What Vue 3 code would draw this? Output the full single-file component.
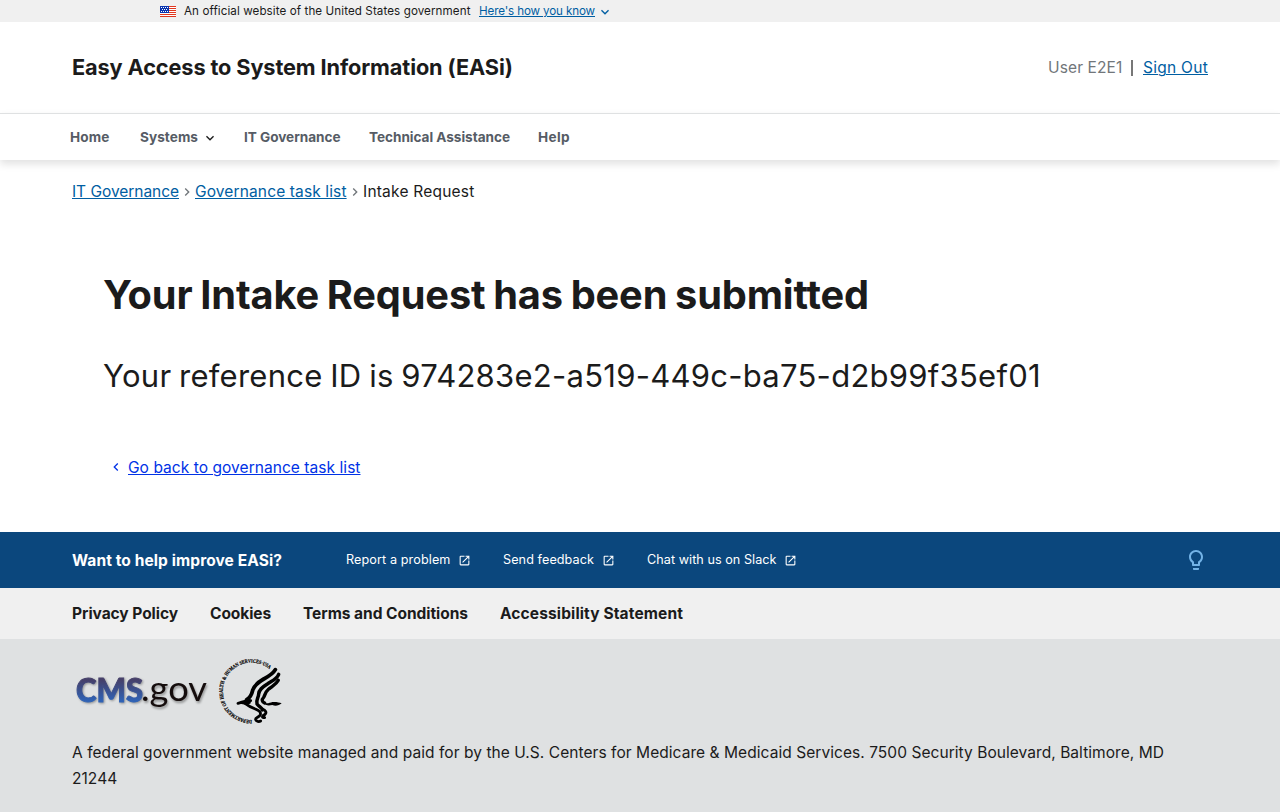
<script setup>
const navItems = [
  { label: 'Home', cls: 'home' },
  { label: 'Systems', cls: 'systems', menu: true },
  { label: 'IT Governance', cls: 'governance' },
  { label: 'Technical Assistance', cls: 'assistance' },
  { label: 'Help', cls: 'help' },
]
const feedback = [
  { label: 'Report a problem', cls: 'report' },
  { label: 'Send feedback', cls: 'send' },
  { label: 'Chat with us on Slack', cls: 'slack' },
]
const policies = [
  { label: 'Privacy Policy', cls: 'privacy' },
  { label: 'Cookies', cls: 'cookies' },
  { label: 'Terms and Conditions', cls: 'terms' },
  { label: 'Accessibility Statement', cls: 'accessibility' },
]
</script>

<template>
  <div class="page">
    <section class="banner">
      <svg class="flag" width="16" height="11" viewBox="0 0 16 11" shape-rendering="crispEdges">
        <rect width="16" height="11" fill="#fff" />
        <g fill="#e0371f">
          <rect v-for="n in 6" :key="n" width="16" height="1" :y="(n - 1) * 2" />
        </g>
        <rect width="9" height="7" fill="#0a35b0" />
        <g fill="#fff">
          <rect v-for="n in 4" :key="'a' + n" :x="n * 2 - 1" y="1" width="1" height="1" />
          <rect v-for="n in 3" :key="'b' + n" :x="n * 2" y="3" width="1" height="1" />
          <rect v-for="n in 4" :key="'c' + n" :x="n * 2 - 1" y="5" width="1" height="1" />
        </g>
      </svg>
      <span class="official">An official website of the United States government</span>
      <a class="know">Here's how you know</a>
      <svg class="know-icon" width="16" height="16" viewBox="0 0 24 24" fill="#005ea2">
        <path d="M16.59 8.59 12 13.17 7.41 8.59 6 10l6 6 6-6z" />
      </svg>
    </section>

    <header class="header">
      <div class="title">Easy Access to System Information (EASi)</div>
      <div class="user">
        <span class="user-name">User E2E1</span>
        <span class="divider"></span>
        <a class="sign-out">Sign Out</a>
      </div>
    </header>

    <nav class="nav">
      <a v-for="item in navItems" :key="item.label" class="nav-item" :class="item.cls">
        <span>{{ item.label }}</span>
        <svg v-if="item.menu" class="chev" width="16" height="16" viewBox="0 0 24 24" fill="#1b1b1b">
          <path d="M16.59 8.59 12 13.17 7.41 8.59 6 10l6 6 6-6z" />
        </svg>
      </a>
    </nav>

    <main class="main">
      <div class="crumbs">
        <a class="crumb-one">IT Governance</a>
        <svg class="sep" width="16" height="16" viewBox="0 0 24 24" fill="#71767a">
          <path d="M10 6 8.59 7.41 13.17 12l-4.58 4.59L10 18l6-6z" />
        </svg>
        <a class="crumb-two">Governance task list</a>
        <svg class="sep" width="16" height="16" viewBox="0 0 24 24" fill="#71767a">
          <path d="M10 6 8.59 7.41 13.17 12l-4.58 4.59L10 18l6-6z" />
        </svg>
        <span class="crumb-three">Intake Request</span>
      </div>
      <div class="confirmation">
        <h1>Your Intake Request has been submitted</h1>
        <h2>Your reference ID is 974283e2-a519-449c-ba75-d2b99f35ef01</h2>
        <a class="back">
          <svg width="16" height="16" viewBox="0 0 24 24" fill="#0032e6">
            <path d="M15.41 7.41 14 6l-6 6 6 6 1.41-1.41L10.83 12z" />
          </svg>
          <span>Go back to governance task list</span>
        </a>
      </div>
    </main>

    <section class="improve">
      <strong>Want to help improve EASi?</strong>
      <a v-for="item in feedback" :key="item.label" class="feedback" :class="item.cls">
        <span>{{ item.label }}</span>
        <svg width="13" height="13" viewBox="0 0 24 24" fill="#fff">
          <path d="M19 19H5V5h7V3H5a2 2 0 0 0-2 2v14a2 2 0 0 0 2 2h14c1.1 0 2-.9 2-2v-7h-2v7zM14 3v2h3.59l-9.83 9.83 1.41 1.41L19 6.41V10h2V3h-7z" />
        </svg>
      </a>
      <svg class="bulb" width="24" height="24" viewBox="0 0 24 24" fill="#73b3e7">
        <path d="M9 21c0 .55.45 1 1 1h4c.55 0 1-.45 1-1v-1H9v1zm3-19C8.14 2 5 5.14 5 9c0 2.38 1.19 4.47 3 5.74V17c0 .55.45 1 1 1h6c.55 0 1-.45 1-1v-2.26c1.81-1.27 3-3.36 3-5.74 0-3.86-3.14-7-7-7zm2.85 11.1-.85.6V16h-4v-2.3l-.85-.6A4.997 4.997 0 0 1 7 9c0-2.76 2.24-5 5-5s5 2.24 5 5c0 1.63-.8 3.16-2.15 4.1z" />
      </svg>
    </section>

    <section class="policies">
      <a v-for="item in policies" :key="item.label" :class="item.cls">{{ item.label }}</a>
    </section>

    <footer class="footer">
      <div class="logos">
        <svg class="cms" width="144" height="76" viewBox="0 0 144 76">
          <defs>
            <linearGradient id="cms-fill" x1="0" y1="0" x2="0" y2="1">
              <stop offset="0.25" stop-color="#46406a" />
              <stop offset="0.8" stop-color="#2f62b5" />
            </linearGradient>
          </defs>
          <text class="cms-name" x="4" y="49.5" textLength="67" lengthAdjust="spacingAndGlyphs" fill="url(#cms-fill)" stroke="url(#cms-fill)">CMS</text>
          <text class="cms-gov" x="69" y="48.5" textLength="66" lengthAdjust="spacingAndGlyphs">.gov</text>
        </svg>
        <svg class="hhs" width="80" height="76" viewBox="0 0 240 228">
          <path id="ring" d="M126 204A86 86 0 1 1 187 59" fill="none" />
          <text class="seal"><textPath href="#ring" textLength="330" lengthAdjust="spacingAndGlyphs">DEPARTMENT OF HEALTH &amp; HUMAN SERVICES·USA</textPath></text>
          <g fill="none" stroke="#000" stroke-linejoin="round" stroke-linecap="round">
            <path d="M196 53C188 67 176 73 161 81 144 91 132 100 128 115 125 128 121 137 110 143" stroke-width="11.5" />
            <path d="M206 67C200 82 187 86 172 96 156 106 147 113 146 126 146 137 137 145 141 156 148 165 157 167 157 174" stroke-width="10.5" />
            <path d="M205 85C198 99 184 103 174 113 164 122 166 129 161 136 154 143 156 149 164 153" stroke-width="10" />
            <path d="M84 154C97 151 106 144 122 146M105 154C114 161 126 167 136 171 149 177 153 180 151 188 148 196 135 196 137 203 139 209 147 210 152 207" stroke-width="8.5" />
            <path d="M157 171C166 174 172 181 164 188 155 192 155 198 164 197" stroke-width="8.5" />
          </g>
          <path d="M82 154C94 148 106 142 125 143L121 155C109 157 101 159 82 154ZM160 151C170 157 179 152 187 150 198 149 208 151 215 154 207 161 196 163 187 159 177 161 166 162 160 151Z" />
        </svg>
      </div>
      <p>A federal government website managed and paid for by the U.S. Centers for Medicare &amp; Medicaid Services. 7500 Security Boulevard, Baltimore, MD 21244</p>
    </footer>
  </div>
</template>

<style>
body { margin: 0; background: #fff; }
</style>

<style scoped>
.page {
  width: 1280px;
  height: 812px;
  overflow: hidden;
  display: flex;
  flex-direction: column;
  font-family: Inter, "Liberation Sans", sans-serif;
  font-size: 15.52px;
  color: #1b1b1b;
  background: #fff;
}
.page * { box-sizing: border-box; }
span, a, strong { white-space: nowrap; }
svg { display: block; flex: none; }
.banner {
  height: 22px;
  display: flex;
  align-items: center;
  padding-left: 160px;
  background: #f0f0f0;
  font-size: 11.64px;
  line-height: 22px;
}
.flag { margin-top: 1px; }
.official { width: 287px; margin-left: 8px; letter-spacing: 0.084px; }
.know { margin-left: 8px; width: 116px; letter-spacing: -0.129px; }
.know-icon { margin: 2px 0 0 2px; }
.know, .sign-out, .crumb-one, .crumb-two {
  color: #005ea2;
  text-decoration: underline;
  text-decoration-thickness: 1px;
  text-underline-offset: 1px;
}
.header {
  height: 91px;
  padding: 0 72px;
  display: flex;
  align-items: center;
  justify-content: space-between;
}
.title { margin-bottom: 2px; font-size: 21.73px; font-weight: 700; letter-spacing: -0.118px; line-height: 32px; }
.user { display: flex; align-items: center; line-height: 24px; }
.user-name { width: 75px; color: #71767a; letter-spacing: 0.121px; }
.divider { width: 2px; height: 16px; margin: 0 10px 0 8px; background: #777; }
.sign-out { width: 65px; letter-spacing: 0.266px; }
.nav {
  height: 47px;
  flex: none;
  padding-left: 70px;
  display: flex;
  align-items: center;
  border-top: 1px solid #dfe1e2;
  box-shadow: 0 4px 8px rgba(0, 0, 0, 0.12);
  color: #565c65;
  font-size: 13.58px;
  font-weight: 700;
}
.nav-item { display: flex; align-items: center; margin-right: 28px; }
.home { width: 42px; letter-spacing: 0.137px; }
.systems { width: 76px; letter-spacing: 0.058px; }
.governance { width: 97px; letter-spacing: -0.026px; }
.assistance { width: 141px; letter-spacing: -0.025px; }
.help { letter-spacing: 0.382px; }
.chev { margin: 2px 0 0 4px; }
.main { height: 372px; }
.crumbs { display: flex; align-items: center; height: 24px; margin: 20px 0 0 72px; line-height: 24px; }
.crumb-one { width: 107px; letter-spacing: -0.048px; }
.crumb-two { width: 152px; letter-spacing: 0.122px; }
.crumb-three { letter-spacing: 0.21px; }
.confirmation { padding: 66px 103px 0; }
h1, h2, p { margin: 0; }
h1 { font-size: 39.77px; line-height: 50px; letter-spacing: -0.145px; word-spacing: -1.5px; }
h2 { margin-top: 31px; font-size: 31.04px; font-weight: 400; line-height: 50px; letter-spacing: 0.25px; word-spacing: -1.3px; white-space: nowrap; }
.back {
  display: flex;
  align-items: center;
  margin: 55px 0 0 5px;
  line-height: 24px;
  color: #0032e6;
  letter-spacing: 0.047px;
}
.back svg { margin-top: -2px; }
.back span { margin-left: 4px; text-decoration: underline; text-decoration-thickness: 1px; text-underline-offset: 1px; }
.improve {
  height: 56px;
  display: flex;
  align-items: center;
  padding: 0 72px;
  background: #0b477d;
  color: #fff;
}
.improve strong { width: 210px; margin-right: 64px; letter-spacing: 0.093px; }
.feedback { display: flex; align-items: center; gap: 7px; margin-right: 32px; font-size: 12.61px; }
.feedback span { margin-bottom: 2px; }
.report { width: 125px; letter-spacing: 0.107px; }
.send { width: 112px; letter-spacing: 0.082px; }
.send svg { margin-left: 1px; }
.slack { letter-spacing: 0.048px; }
.feedback svg { margin-top: 1px; }
.bulb { margin-left: auto; }
.policies {
  height: 51px;
  display: flex;
  align-items: center;
  gap: 32px;
  padding-left: 72px;
  background: #f0f0f0;
  font-weight: 700;
}
.privacy { width: 106px; letter-spacing: -0.054px; }
.cookies { width: 61px; letter-spacing: -0.092px; }
.terms { width: 165px; letter-spacing: -0.043px; }
.accessibility { letter-spacing: 0.122px; }
.footer { flex: 1; padding: 13px 72px 0; background: #dfe1e2; }
.logos { display: flex; align-items: flex-start; }
.cms { margin-right: -6px; }
.cms-name {
  font-family: Lato, sans-serif;
  font-size: 31.5px;
  font-weight: 900;
  stroke-width: 1px;
  filter: drop-shadow(1px 1px 1px rgba(0, 0, 0, 0.35));
}
.cms-gov {
  font-family: Lato, sans-serif;
  font-size: 34px;
  fill: #150d0d;
  filter: drop-shadow(1px 2px 1px rgba(0, 0, 0, 0.35));
}
.seal { font-family: "Liberation Serif", serif; font-size: 16px; font-weight: 700; fill: #000; stroke: #000; stroke-width: 0.6px; }
.footer p { margin-top: 12px; line-height: 26px; letter-spacing: 0.05px; }
</style>
